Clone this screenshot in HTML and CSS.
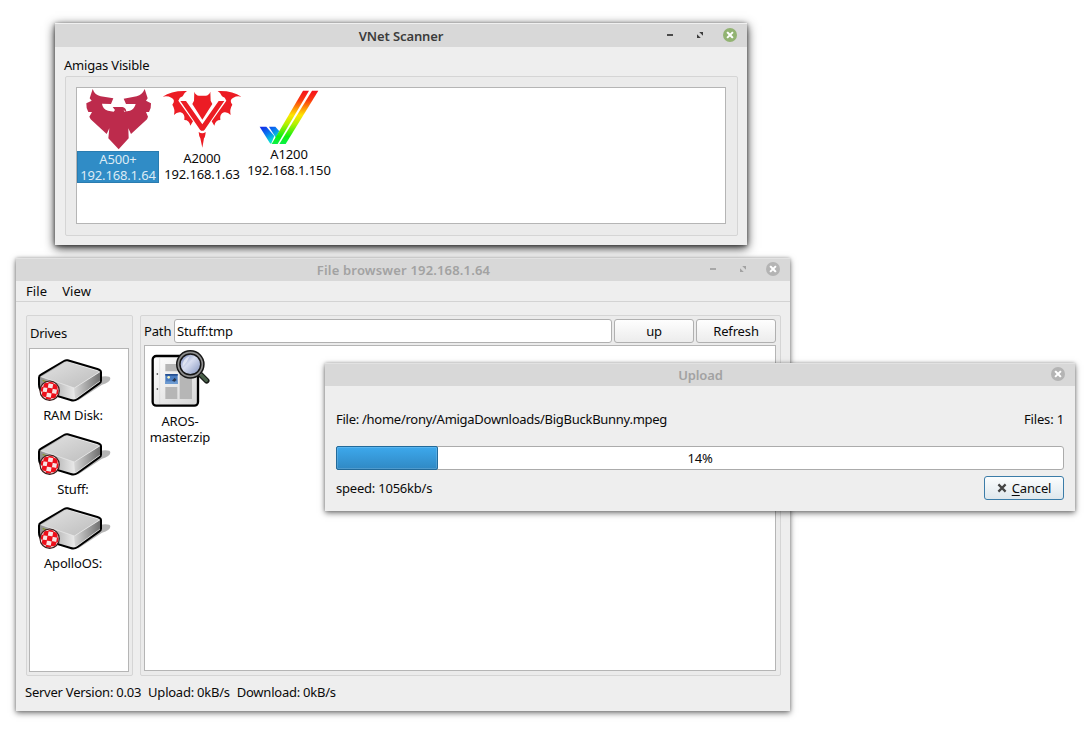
FILE: index.html
```html
<!DOCTYPE html>
<html lang="en">
<head>
<meta charset="utf-8">
<title>VNet Scanner</title>
<link rel="stylesheet" href="styles.css">
</head>
<body>
<svg class="defs" width="0" height="0">
  <defs>
    <linearGradient id="rainbow" gradientUnits="userSpaceOnUse" x1="0" y1="32" x2="0" y2="192">
      <stop offset="0" stop-color="#f5101c"/><stop offset=".18" stop-color="#fb3a10"/>
      <stop offset=".46" stop-color="#ffe600"/><stop offset=".62" stop-color="#b4f000"/>
      <stop offset=".86" stop-color="#10f010"/><stop offset="1" stop-color="#08f048"/>
    </linearGradient>
    <linearGradient id="cool" gradientUnits="userSpaceOnUse" x1="580" y1="140" x2="612" y2="192">
      <stop offset="0" stop-color="#1230e8"/><stop offset=".4" stop-color="#0878f0"/>
      <stop offset=".8" stop-color="#08dcd8"/><stop offset="1" stop-color="#08f078"/>
    </linearGradient>
    <linearGradient id="driveTop" x1="0" y1="0" x2="1" y2="1">
      <stop offset="0" stop-color="#e2e2e2"/><stop offset="1" stop-color="#bcbcbc"/>
    </linearGradient>
    <linearGradient id="driveSide" x1="0" y1="0" x2="1" y2="0">
      <stop offset="0" stop-color="#d8d8d8"/><stop offset="1" stop-color="#707070"/>
    </linearGradient>
    <linearGradient id="driveFront" x1="0" y1="0" x2="1" y2="0">
      <stop offset="0" stop-color="#8c8c8c"/><stop offset=".6" stop-color="#eeeeee"/>
    </linearGradient>
    <linearGradient id="page" x1="0" y1="0" x2="1" y2="1">
      <stop offset="0" stop-color="#ffffff"/><stop offset="1" stop-color="#d6d6d6"/>
    </linearGradient>
    <linearGradient id="lens" x1="0" y1="0" x2="1" y2="1">
      <stop offset="0" stop-color="#5a6fae"/><stop offset=".45" stop-color="#d8def0"/><stop offset="1" stop-color="#7285b4"/>
    </linearGradient>
    <clipPath id="ballClip"><circle cx="89" cy="122" r="27"/></clipPath>
    <symbol id="drive" viewBox="48 24 228 138">
      <path d="M240 80Q272 76 271 86Q270 97 246 104L172 153Z" fill="#b5b5b5"/>
      <path d="M143 31L232 57Q243 60 243 67V92Q243 97 238 100L173 147Q163 154 152 150L66 124Q57 119 57 103V83Q57 77 63 74L132 33Q137 30 143 31Z" fill="url(#driveFront)" stroke="#000" stroke-width="6" stroke-linejoin="round"/>
      <path d="M240 66V92L165 147L162 114Z" fill="url(#driveSide)"/>
      <path d="M140 35L239 65L163 114L62 80Z" fill="url(#driveTop)"/>
      <path d="M62 80L163 114L239 66" fill="none" stroke="#ededed" stroke-width="2"/>
      <path d="M68 91L80 96" stroke="#8a9a30" stroke-width="4"/>
      <circle cx="89" cy="122" r="28" fill="#f6e4e4"/>
      <g clip-path="url(#ballClip)">
        <path fill="#ec0f1a" transform="rotate(10 89 122)" d="M60 94H68V101H60ZM81 94H97V101H81ZM110 94H120V101H110ZM68 100H82V115H68ZM96 100H111V115H96ZM60 114H69V129H60ZM81 114H97V129H81ZM110 114H120V129H110ZM68 128H82V143H68ZM96 128H111V143H96ZM81 142H97V152H81ZM60 142H69V152H60ZM110 142H120V152H110Z"/>
      </g>
      <circle cx="89" cy="122" r="29" fill="none" stroke="#3f1c1c" stroke-width="3.5"/>
    </symbol>
    <symbol id="close" viewBox="0 0 14 14">
      <circle cx="7" cy="7" r="7" fill="currentColor"/>
      <path d="M4.8 4.8L9.2 9.2M9.2 4.8L4.8 9.2" stroke="#fff" stroke-width="2" stroke-linecap="square"/>
    </symbol>
    <symbol id="maximize" viewBox="0 0 8 8">
      <path d="M3.2 1H7V4.8ZM1 3.2V7H4.8Z" fill="currentColor"/>
    </symbol>
  </defs>
</svg>

<main class="desktop">
  <section class="window scanner active">
    <header class="titlebar">
      <h1 class="title">VNet Scanner</h1>
      <div class="controls">
        <span class="minimize"></span>
        <svg class="maximize"><use href="#maximize"/></svg>
        <svg class="close"><use href="#close"/></svg>
      </div>
    </header>
    <div class="scanner-body">
      <div class="group-label">Amigas Visible</div>
      <div class="group scanner-group">
        <div class="list amiga-list">
          <div class="amiga selected">
            <svg class="amiga-icon eagle" viewBox="15 12 201 189" fill="#bd2b4c">
              <path d="M38 15Q44 33 62 37L100 43L93 60L66 59Q68 75 84 80L101 83L105 78L98 69H127Q138 71 139 83L131 79L133 83L150 80Q163 76 167 60L138 60L131 44L170 37Q187 32 194 15L203 43L198 50L213 58Q214 74 207 84H198L204 98L201 106L153 150L145 133L146 163L116 196L85 163L88 133L80 150L32 106L28 98L36 84H25Q18 74 19 58L35 50L29 43Z"/>
            </svg>
            <div class="amiga-name">A500+<br>192.168.1.64</div>
          </div>
          <div class="amiga">
            <svg class="amiga-icon bat" viewBox="276 24 240 186" fill="#ec1c24">
              <path d="M278 50Q305 31 351 33Q341 39 338 49Q328 52 325 62L369 124L361 137Q358 120 343 120Q346 102 332 97Q321 95 312 105Q316 88 307 74Q318 60 304 53Q292 46 278 50Z"/>
              <path d="M514 50Q487 31 443 33Q453 39 456 49Q466 52 469 62L425 124L433 137Q436 120 451 120Q448 102 462 97Q473 95 482 105Q478 88 487 74Q476 60 490 53Q502 46 514 50Z"/>
              <path d="M331 63H348L397 133L446 63H463L404 149Q397 156 390 149Z"/>
              <path d="M373 35Q377 46 387 47H407Q417 46 421 35L422 62L427 72L397 119L367 72L372 62Z"/>
              <path d="M386 156Q397 164 407 156Q406 171 402 175L397 203L391 175Q387 170 386 156Z"/>
            </svg>
            <div class="amiga-name">A2000<br>192.168.1.63</div>
          </div>
          <div class="amiga">
            <svg class="amiga-icon tick" viewBox="564 24 186 174">
              <path d="M569 140H589L613 168L603 192L598 187Z" fill="url(#cool)"/>
              <path d="M597 140H616L628 154L618 174Z" fill="url(#cool)"/>
              <path d="M699 32H717L623 192H605Z" fill="url(#rainbow)"/>
              <path d="M726 32H745L647 192H628Z" fill="url(#rainbow)"/>
            </svg>
            <div class="amiga-name">A1200<br>192.168.1.150</div>
          </div>
        </div>
      </div>
    </div>
  </section>

  <section class="window browser">
    <header class="titlebar">
      <h1 class="title wide">File browswer 192.168.1.64</h1>
      <div class="controls">
        <span class="minimize"></span>
        <svg class="maximize"><use href="#maximize"/></svg>
        <svg class="close"><use href="#close"/></svg>
      </div>
    </header>
    <nav class="menubar"><span>File</span><span>View</span></nav>
    <div class="panes">
      <div class="group drives">
        <div class="drives-label">Drives</div>
        <div class="list drive-list">
          <div class="drive"><svg class="drive-icon"><use href="#drive"/></svg><span>RAM Disk:</span></div>
          <div class="drive"><svg class="drive-icon"><use href="#drive"/></svg><span>Stuff:</span></div>
          <div class="drive"><svg class="drive-icon"><use href="#drive"/></svg><span>ApolloOS:</span></div>
        </div>
      </div>
      <div class="group files">
        <div class="path-row">
          <label class="path-label">Path</label>
          <div class="field">Stuff:tmp</div>
          <button class="button">up</button>
          <button class="button">Refresh</button>
        </div>
        <div class="list file-list">
          <div class="file">
            <svg class="file-icon" viewBox="30 24 183 180">
              <rect x="38" y="48" width="136" height="149" rx="11" fill="url(#page)" stroke="#000" stroke-width="7"/>
              <path d="M59 53V192" stroke="#d2d2d2" stroke-width="1.5"/>
              <circle cx="52" cy="102" r="2.5" fill="#222"/><circle cx="52" cy="147" r="2.5" fill="#222"/>
              <path d="M76 72H112V94H76ZM76 141H112V177H76ZM119 72H156V177H119Z" fill="#b6b6b6"/>
              <rect x="76" y="102" width="37" height="30" fill="#4a7cc0"/>
              <path d="M76 102H113V107H76Z" fill="#244f91"/>
              <path d="M76 124H113V132H76Z" fill="#6d9bd1"/>
              <circle cx="86" cy="112" r="4" fill="#f7f5c0"/>
              <path d="M96 122L104 113L109 119L104 125Z" fill="#28364e"/>
              <path d="M176 98L200 122" stroke="#171b17" stroke-width="17" stroke-linecap="round"/>
              <path d="M175 97L184 106" stroke="#9b9f9b" stroke-width="8"/>
              <path d="M185 107L199 121" stroke="#49614a" stroke-width="10" stroke-linecap="round"/>
              <circle cx="151" cy="73" r="36" fill="url(#lens)" stroke="#161616" stroke-width="14"/>
              <circle cx="151" cy="73" r="36" fill="none" stroke="#8f8f8f" stroke-width="5"/>
              <path d="M128 80Q126 56 149 49Q141 68 128 80Z" fill="#fff" opacity=".55"/>
            </svg>
            <div>AROS-<br>master.zip</div>
          </div>
        </div>
      </div>
    </div>
    <footer class="status"><span>Server Version: 0.03</span><span>Upload: 0kB/s</span><span>Download: 0kB/s</span></footer>
  </section>

  <section class="window upload">
    <header class="titlebar">
      <h1 class="title">Upload</h1>
      <div class="controls"><svg class="close"><use href="#close"/></svg></div>
    </header>
    <div class="upload-body">
      <div class="row file-row"><span class="filename">File: /home/rony/AmigaDownloads/BigBuckBunny.mpeg</span><span>Files: 1</span></div>
      <div class="progress"><div class="bar"></div><span class="percent">14%</span></div>
      <div class="row speed-row">
        <span class="speed">speed: 1056kb/s</span>
        <button class="button cancel">
          <svg width="10" height="10" viewBox="0 0 10 10"><path d="M1.4 1.4L8.6 8.6M8.6 1.4L1.4 8.6" stroke="#444" stroke-width="2.2"/></svg>
          <span><u>C</u>ancel</span>
        </button>
      </div>
    </div>
  </section>
</main>
</body>
</html>
```

FILE: styles.css
```css
* { box-sizing: border-box; }
body { margin: 0; background: #fff; }
svg { display: block; }
.defs { position: absolute; }
.desktop {
  position: relative;
  width: 1088px;
  height: 745px;
  overflow: hidden;
  font: 13px/16px "Noto Sans", "Open Sans", sans-serif;
  letter-spacing: -0.15px;
  color: #0a0a0a;
}

/* Window frames */
.window {
  position: absolute;
  display: flex;
  flex-direction: column;
  background: #eee;
  box-shadow: 0 2px 6px rgba(0, 0, 0, .55), 0 0 3px rgba(0, 0, 0, .2);
}
.window.active { box-shadow: 0 3px 10px rgba(0, 0, 0, .8), 0 1px 4px rgba(0, 0, 0, .5); }
.scanner { left: 55px; top: 23px; width: 692px; height: 222px; }
.browser { left: 16px; top: 258px; width: 774px; height: 453px; }
.upload { left: 325px; top: 363px; width: 750px; height: 148px; }

.titlebar {
  display: grid;
  grid-template-columns: 1fr auto;
  align-items: start;
  flex: none;
  height: 23px;
  padding-right: 10px;
  background: #d8d8d8;
  border-top: 1px solid #e2e2e2;
  color: #a2a2a2;
}
.active .titlebar { height: 24px; color: #3c3c3c; border-top-color: #f0f0f0; }
.title {
  grid-area: 1 / 1 / 2 / 3;
  margin: 0;
  padding: 3px 0 0 11px;
  font-size: 13px;
  line-height: 16px;
  font-weight: 600;
  letter-spacing: -0.1px;
  text-align: center;
}
.active .title { padding-top: 4px; padding-left: 10px; }
.title.wide { letter-spacing: 0.17px; }
.controls { grid-area: 1 / 2; display: flex; align-items: center; padding-top: 3px; }
.active .controls { padding-top: 4px; }
.minimize { width: 6px; height: 2px; margin-right: 23px; background: currentColor; opacity: .9; }
.maximize { width: 8px; height: 8px; margin-right: 19px; }
.close { width: 14px; height: 14px; color: #b4b4b4; }
.active .close { color: #92b372; }

/* Shared widgets */
.group { flex: none; background: #ebebeb; border: 1px solid #d5d5d5; border-radius: 2px; }
.list { background: #fff; border: 1px solid #b5b5b5; }
.button {
  width: 80px;
  height: 24px;
  padding: 0;
  border: 1px solid #b0b0b0;
  border-radius: 3px;
  background: linear-gradient(#fefefe, #ececec);
  font: inherit;
  letter-spacing: inherit;
  color: inherit;
}

/* Scanner */
.scanner-body { display: flex; flex-direction: column; flex: 1; padding: 10px 9px 9px; }
.group-label { height: 19px; letter-spacing: -0.2px; }
.scanner-body .scanner-group { flex: 1; margin-left: 1px; padding: 10px 11px 11px 10px; }
.amiga-list { display: flex; height: 137px; gap: 4px; }
.amiga { display: flex; flex-direction: column; align-items: center; width: 78px; text-align: center; white-space: nowrap; }
.amiga:last-child { width: 84px; margin-left: 2px; letter-spacing: -0.1px; }
.amiga.selected { width: 82px; }
.amiga-icon { flex: none; }
.eagle { width: 67px; height: 63px; }
.bat { width: 80px; height: 62px; }
.tick { width: 62px; height: 58px; }
.selected .amiga-name {
  width: 82px;
  height: 32px;
  background: #308cc6;
  box-shadow: inset 0 0 0 1px #2a7cb0;
  color: #dcebf5;
}

/* Browser */
.menubar { display: flex; gap: 15px; height: 21px; padding: 2px 10px; border-bottom: 1px solid #d3d3d3; letter-spacing: 0.1px; }
.panes { display: flex; gap: 7px; padding: 13px 0 0 10px; height: 374px; }
.drives { width: 107px; padding: 9px 3px 3px 2px; }
.drives-label { height: 23px; padding-left: 1px; letter-spacing: -0.25px; }
.drive-list { display: flex; flex-direction: column; gap: 12px; height: 324px; padding-top: 9px; }
.drive { width: 86px; height: 62px; display: flex; flex-direction: column; align-items: center; }
.drive-icon { width: 76px; height: 46px; margin: 0 0 3px 2px; flex: none; }
.files { width: 641px; padding: 3px 4px 3px 3px; }
.path-row { display: flex; align-items: center; gap: 2px; height: 26px; padding-bottom: 2px; }
.path-label { width: 28px; }
.field { flex: 1; height: 24px; padding: 3px 2px; background: #fff; border: 1px solid #b0b0b0; border-radius: 3px; }
.file-list { height: 326px; padding: 2px 4px; }
.file { width: 62px; text-align: center; display: flex; flex-direction: column; align-items: center; }
.file-icon { width: 61px; height: 60px; margin-bottom: 5px; }
.status { display: flex; gap: 7px; padding: 8px 9px; white-space: nowrap; letter-spacing: -0.24px; }

/* Upload */
.upload-body { display: flex; flex-direction: column; padding: 25px 11px 11px; }
.row { display: flex; justify-content: space-between; }
.file-row { height: 35px; }
.filename { letter-spacing: -0.27px; }
.speed { letter-spacing: -0.22px; }
.progress { display: grid; height: 24px; background: #fff; border: 1px solid #ababab; border-radius: 3px; }
.bar {
  grid-area: 1 / 1;
  width: 102px;
  margin: -1px 0 -1px -1px;
  border: 1px solid #226a9a;
  border-radius: 2px;
  background: linear-gradient(#3da8ec, #3089c4);
  box-shadow: inset 0 0 0 1px rgba(255, 255, 255, .15);
}
.percent { grid-area: 1 / 1; padding-top: 3px; text-align: center; }
.speed-row { padding-top: 6px; height: 30px; line-height: 24px; }
.cancel { display: flex; align-items: center; justify-content: center; gap: 5px; border-color: #3b7ca8; background: linear-gradient(#fbfdfe, #dfe7ec); }
.cancel u { text-underline-offset: 2px; }
```
